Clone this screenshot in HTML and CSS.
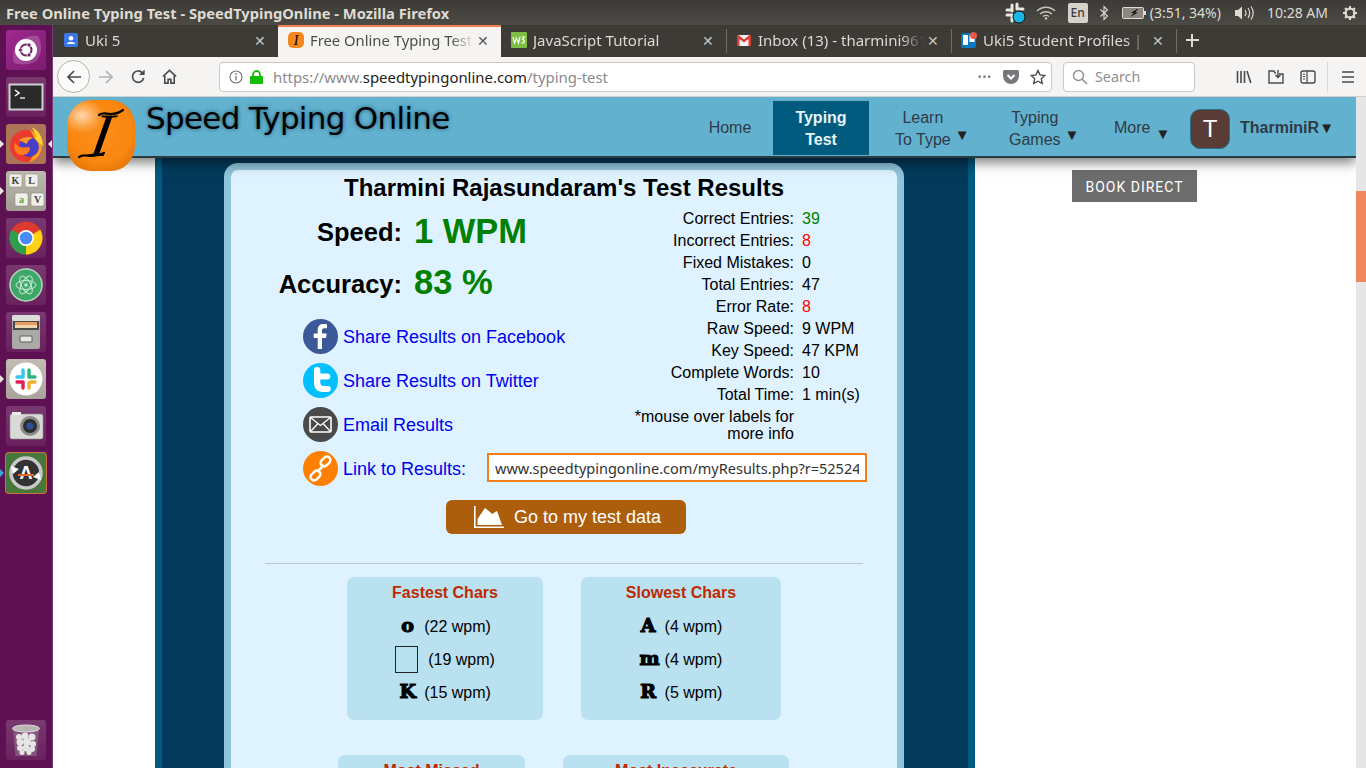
FILE: index.html
```html
<!DOCTYPE html>
<html lang="en">
<head>
<meta charset="utf-8">
<title>Free Online Typing Test - SpeedTypingOnline - Mozilla Firefox</title>
<link rel="stylesheet" href="styles.css">
</head>
<body>
<header class="panel">
  <div class="panel-title">Free Online Typing Test - SpeedTypingOnline - Mozilla Firefox</div>
  <div class="indicators">
    <svg class="ind-slack" viewBox="0 0 22 22"><g stroke="#e8e6e0" stroke-width="3" stroke-linecap="round"><path d="M8 3v6M3 8h5M13 2v5M14 7h5M3 13h5M8 14v5"/></g><circle cx="15" cy="15" r="6" fill="#19b5e6" stroke="#111" stroke-width="1"/></svg>
    <svg class="ind-wifi" viewBox="0 0 20 14"><g fill="none" stroke="#c9c6bd" stroke-width="1.3"><path d="M1 5c5-5 13-5 18 0"/><path d="M4 8c3.500-3 8.500-3 12 0"/><path d="M7 10.500c2-1.500 4-1.500 6 0"/></g><circle cx="10" cy="12.500" r="1.300" fill="#c9c6bd"/></svg>
    <span class="ind-lang">En</span>
    <svg class="ind-bt" viewBox="0 0 10 16"><path d="M1.500 4.500l7 6.500-3.500 3.500v-13l3.500 3.500-7 6.500" fill="none" stroke="#dfdbd2" stroke-width="1.100"/></svg>
    <svg class="ind-batt" viewBox="0 0 24 12"><rect x=".5" y=".5" width="21" height="11" rx="1" fill="#8a8880" stroke="#dfdbd2"/><rect x="22" y="4" width="2" height="4" fill="#dfdbd2"/><path d="M15 2l-6 4h3l-4 4 8-4.500h-3l3-3.500z" fill="#111"/></svg>
    <span class="ind-text ind-pct">(3:51, 34%)</span>
    <svg class="ind-vol" viewBox="0 0 20 16"><path d="M1 5h3l4-3.500v13L4 11H1z" fill="#dfdbd2"/><g fill="none" stroke="#dfdbd2" stroke-width="1.200"><path d="M11 5c1.300 2 1.300 4 0 6M14 3c2 3 2 7 0 10M17 1.500c2.700 4 2.700 9 0 13"/></g></svg>
    <span class="ind-text ind-time">10:28 AM</span>
    <svg class="ind-gear" viewBox="0 0 16 16"><circle cx="8" cy="8" r="4.500" fill="none" stroke="#dfdbd2" stroke-width="2"/><path d="M8 1v4M8 11v4M1 8h4M11 8h4M3 3l2.500 2.500M13 3l-2.500 2.500M3 13l2.500-2.500M13 13l-2.500-2.500" stroke="#dfdbd2" stroke-width="2"/></svg>
  </div>
</header>

<div class="desktop">
  <nav class="launcher">
    <div class="tile tile-ubuntu"><svg viewBox="0 0 40 40"><path d="M8 33C4 18 14 4 32 6c5 8 4 20-3 26-7 3-15 3-21 1z" fill="#fff" opacity=".18"/><circle cx="20" cy="20" r="11" fill="#fff"/><circle cx="20" cy="20" r="5.500" fill="none" stroke="#6f2166" stroke-width="2"/><g fill="#6f2166" stroke="#fff" stroke-width=".7"><circle cx="14.500" cy="20" r="2"/><circle cx="23" cy="15" r="2"/><circle cx="23" cy="25" r="2"/></g></svg></div>
    <div class="tile tile-dark"><svg viewBox="0 0 40 40"><rect x="3.500" y="7.500" width="33" height="25" fill="#2a2a2a" stroke="#cfcfcf" stroke-width="2"/><path d="M9 13l4 3-4 3" fill="none" stroke="#fff" stroke-width="1.500"/><path d="M14 21h5" stroke="#fff" stroke-width="1.300"/></svg></div>
    <div class="tile tile-fox pip-left pip-right"><svg viewBox="0 0 40 40"><circle cx="20" cy="22" r="16" fill="#ea3a2e"/><path d="M24 6.500C32 8 36 15 36 22c0 8-6 15-13 16 7-8 9-22 1-31.500z" fill="#ff9c1a"/><path d="M25 3c8 3 12 11 12 19l-8-7c2-3 0-8-4-12z" fill="#ffd430"/><circle cx="23" cy="23" r="10" fill="#4b3ec6"/><path d="M9 18c2 6 9 6 14 5 3 3-2 9-8 8-6-1-8-7-6-13z" fill="#ff7a1a"/><path d="M13 16c4-3 10-4 14-2-3 1-6 3-6 6z" fill="#ff9a2a"/></svg></div>
    <div class="tile tile-keys pip-left"><svg viewBox="0 0 40 40"><g fill="#efeee8" stroke="#8a887e" stroke-width=".5"><rect x="3" y="3" width="13" height="13" rx="2"/><rect x="19" y="3" width="13" height="13" rx="2"/><rect x="9" y="22" width="13" height="13" rx="2"/><rect x="25" y="22" width="13" height="13" rx="2"/></g><g class="key-text"><text x="9.500" y="13">K</text><text x="25.500" y="13">L</text><text x="15.500" y="32" class="key-a">a</text><text x="31.500" y="32">V</text></g></svg></div>
    <div class="tile"><svg viewBox="0 0 40 40"><circle cx="20" cy="20" r="16.500" fill="#dd3a2f"/><path d="M20 20L34.300 11.800A16.500 16.500 0 0 1 20 36.500z" fill="#fcd116"/><path d="M20 20L20 36.500A16.500 16.500 0 0 1 5.700 11.800z" fill="#2f9f4b"/><circle cx="20" cy="20" r="8" fill="#fff"/><circle cx="20" cy="20" r="6.300" fill="#4a8af4"/></svg></div>
    <div class="tile"><svg viewBox="0 0 40 40"><circle cx="20" cy="20" r="16" fill="#3fa768" stroke="#b5d8c2" stroke-width="1.500"/><g fill="none" stroke="#c9ead6" stroke-width="1"><ellipse cx="20" cy="20" rx="10" ry="4.500"/><ellipse cx="20" cy="20" rx="10" ry="4.500" transform="rotate(60 20 20)"/><ellipse cx="20" cy="20" rx="10" ry="4.500" transform="rotate(120 20 20)"/></g><circle cx="20" cy="20" r="1.800" fill="#c9ead6"/></svg></div>
    <div class="tile"><svg viewBox="0 0 40 40"><rect x="6" y="3" width="28" height="34" rx="2" fill="#a9a9a5"/><rect x="6" y="3" width="28" height="6" rx="2" fill="#dcdcd8"/><rect x="7" y="9" width="26" height="9" fill="#4a4a46"/><rect x="9" y="10" width="22" height="3" fill="#e99a60"/><rect x="9" y="13" width="22" height="3" fill="#f2d6b0"/><rect x="14" y="24" width="12" height="6" rx="1" fill="#e8e8e4" stroke="#5a5a56"/></svg></div>
    <div class="tile tile-light pip-left"><svg viewBox="0 0 40 40"><circle cx="20" cy="20" r="16.500" fill="#fff"/><g stroke-width="3.400" stroke-linecap="round"><path d="M17 11v7" stroke="#36c5f0"/><path d="M11 18h5" stroke="#36c5f0"/><path d="M23 11v7" stroke="#2eb67d"/><path d="M24 18h5" stroke="#2eb67d"/><path d="M24 23h5" stroke="#ecb22e"/><path d="M23 24v5" stroke="#ecb22e"/><path d="M11 23h6" stroke="#e01e5a"/><path d="M17 24v5" stroke="#e01e5a"/></g></svg></div>
    <div class="tile"><svg viewBox="0 0 40 40"><rect x="4" y="8" width="33" height="25" rx="2" fill="#d9d9d6" stroke="#8a8a86" stroke-width=".6"/><rect x="6" y="6" width="9" height="3" fill="#ebebe8"/><circle cx="24" cy="20" r="10" fill="#8a8a88"/><circle cx="24" cy="20" r="7" fill="#2d2d2d"/><circle cx="24" cy="20" r="3.500" fill="#2c4fa0"/></svg></div>
    <div class="tile tile-green pip-left pip-blue"><svg viewBox="0 0 40 40"><circle cx="20" cy="20" r="15" fill="#333" stroke="#c9c9c9" stroke-width="3.500"/><path d="M5 13l2 8 6-5zM35 27l-2-8-6 5z" fill="#fff"/><text class="soft-a" x="20" y="26">A</text><path d="M12 22h16" stroke="#e8652f" stroke-width="2"/></svg></div>
    <div class="tile tile-trash"><svg viewBox="0 0 40 40"><path d="M7 9h26l-2.500 27h-21z" fill="#8c6a8a" opacity=".7"/><ellipse cx="20" cy="8.500" rx="13.500" ry="3.500" fill="#b9b7b2" stroke="#dfdeda"/><g fill="#e6e5e2"><circle cx="13" cy="17" r="3"/><circle cx="19" cy="16" r="3.500"/><circle cx="26" cy="17" r="3.500"/><circle cx="14" cy="22" r="3.500"/><circle cx="21" cy="22" r="4"/><circle cx="27" cy="24" r="3"/><circle cx="14" cy="28" r="3"/><circle cx="20" cy="28" r="3.500"/><circle cx="26" cy="29" r="3"/><circle cx="16" cy="32.500" r="2.500"/><circle cx="23" cy="32.500" r="2.500"/></g></svg></div>
  </nav>

  <div class="browser">
    <div class="tabs">
      <div class="tab"><svg class="favicon" viewBox="0 0 16 16"><rect x="1" y="1" width="14" height="14" rx="2" fill="#3b78e7"/><circle cx="8" cy="6.200" r="2.300" fill="#fff"/><path d="M3.800 12c.6-2.600 7.800-2.600 8.400 0z" fill="#fff"/></svg><span class="tab-label">Uki 5</span><span class="tab-x">✕</span></div>
      <div class="tab tab-active"><svg class="favicon" viewBox="0 0 16 16"><rect width="16" height="16" rx="5" fill="#f5871f"/><text class="fav-i" x="8" y="13">I</text></svg><span class="tab-label">Free Online Typing Test -</span><span class="tab-x">✕</span></div>
      <div class="tab"><svg class="favicon" viewBox="0 0 16 16"><rect width="16" height="16" rx="1" fill="#7dbf42"/><path d="M2 5l1.500 6 2-5 2 5L9 5" fill="none" stroke="#fff" stroke-width="1.200"/><path d="M10.500 5h3l-2 2.500c2.500 0 2.500 4-1 3.500" fill="none" stroke="#fff" stroke-width="1.200"/></svg><span class="tab-label">JavaScript Tutorial</span><span class="tab-x">✕</span></div>
      <div class="tab tab-sep"><svg class="favicon" viewBox="0 0 16 16"><rect x="1" y="3" width="14" height="11" fill="#f1f1f1"/><path d="M1 3v11h2.500V7L8 10.500 12.500 7v7H15V3h-1.500L8 7.500 2.500 3z" fill="#d93f32"/></svg><span class="tab-label">Inbox (13) - tharmini961</span><span class="tab-x">✕</span></div>
      <div class="tab tab-sep"><svg class="favicon" viewBox="0 0 16 16"><rect y="1" width="15" height="15" rx="2" fill="#0a79bf"/><rect x="2" y="3" width="5" height="10" fill="#fff"/><rect x="8.500" y="3" width="5" height="7" fill="#fff"/><circle cx="12.500" cy="3.500" r="3.500" fill="#eb5a46"/></svg><span class="tab-label">Uki5 Student Profiles | Tr</span><span class="tab-x">✕</span></div>
      <div class="tab-new"><span class="tab-plus"></span></div>
    </div>

    <div class="toolbar">
      <button class="back" type="button"><svg viewBox="0 0 18 18"><path d="M16 9H3M9 3L3 9l6 6" fill="none" stroke="#4a4a4f" stroke-width="1.700"/></svg></button>
      <svg class="tool tool-forward" viewBox="0 0 18 18"><path d="M2 9h13M9 3l6 6-6 6" fill="none" stroke="#b1b1b3" stroke-width="1.700"/></svg>
      <svg class="tool tool-reload" viewBox="0 0 18 18"><path d="M14.500 10.500A6 6 0 1 1 13 5" fill="none" stroke="#4a4a4f" stroke-width="1.800"/><path d="M15.500 1.500v6h-6z" fill="#4a4a4f"/></svg>
      <svg class="tool tool-home" viewBox="0 0 18 18"><path d="M2 9l7-6.500L16 9" fill="none" stroke="#4a4a4f" stroke-width="1.700"/><path d="M4 8v8h3.500v-4h3v4H14V8" fill="none" stroke="#4a4a4f" stroke-width="1.700"/></svg>
      <div class="urlbar">
        <svg class="url-info" viewBox="0 0 14 14"><circle cx="7" cy="7" r="6" fill="none" stroke="#77767b" stroke-width="1.100"/><path d="M7 6v4.500" stroke="#77767b" stroke-width="1.400"/><circle cx="7" cy="3.900" r=".9" fill="#77767b"/></svg>
        <svg class="url-lock" viewBox="0 0 13 14"><rect y="6" width="13" height="8" rx="1" fill="#12bc00"/><path d="M3 6.500V4.500a3.500 3.500 0 0 1 7 0v2" fill="none" stroke="#12bc00" stroke-width="1.800"/></svg>
        <span class="url-text"><span class="url-dim">https://www.</span>speedtypingonline.com<span class="url-dim">/typing-test</span></span>
        <span class="url-dots">•••</span>
        <svg class="url-pocket" viewBox="0 0 16 14"><path d="M1.500 0h13A1.500 1.500 0 0 1 16 1.500V6A8 8 0 0 1 0 6V1.500A1.500 1.500 0 0 1 1.500 0z" fill="#77767b"/><path d="M4.500 5L8 8.500 11.500 5" fill="none" stroke="#fff" stroke-width="2"/></svg>
        <svg class="url-star" viewBox="0 0 16 16"><path d="M8 1.500l2 4.400 4.800.6-3.500 3.300.9 4.700L8 12.200l-4.200 2.300.9-4.700L1.200 6.500 6 5.900z" fill="none" stroke="#4a4a4f" stroke-width="1.400"/></svg>
      </div>
      <div class="searchbar">
        <svg viewBox="0 0 16 16"><circle cx="6.500" cy="6.500" r="5" fill="none" stroke="#8f8f92" stroke-width="1.400"/><path d="M10.200 10.200L15 15" stroke="#8f8f92" stroke-width="1.600"/></svg>
        <span>Search</span>
      </div>
      <svg class="tool tool-lib" viewBox="0 0 16 16"><path d="M1.500 2v12M5 2v12M8.500 2v12M11 2l3.800 12" fill="none" stroke="#4a4a4f" stroke-width="1.600"/></svg>
      <svg class="tool tool-dl" viewBox="0 0 16 16"><path d="M1 4v10h14V5h-4M1 4V2h5l1 2h1" fill="none" stroke="#4a4a4f" stroke-width="1.400"/><path d="M10 1v7M7.500 6l2.500 2.500L12.500 6" fill="none" stroke="#4a4a4f" stroke-width="1.400"/></svg>
      <svg class="tool tool-side" viewBox="0 0 16 16"><rect x="1" y="2" width="14" height="12" rx="2" fill="none" stroke="#4a4a4f" stroke-width="1.400"/><path d="M7 2v12M3 5h2M3 7.500h2M3 10h2" stroke="#4a4a4f" stroke-width="1.200"/></svg>
      <span class="tool-sep"></span>
      <svg class="tool tool-menu" viewBox="0 0 16 16"><path d="M2 3h12M2 8h12M2 13h12" stroke="#4a4a4f" stroke-width="1.600"/></svg>
    </div>

    <div class="viewport">
      <div class="page">
        <div class="site-header">
          <div class="logo"><svg viewBox="0 0 68 71"><text class="logo-i" x="41" y="56" transform="skewX(-10)">I</text><path d="M32 15c4-3 7-1 12-1 5 0 8-1 12-4M12 57c5-3 8-1 13-1 5 0 8-1 12-3" fill="none" stroke="#000" stroke-width="2.200" stroke-linecap="round"/></svg></div>
          <div class="site-name">Speed Typing Online</div>
          <ul class="site-nav">
            <li class="nav-home">Home</li>
            <li class="nav-active">Typing<br>Test</li>
            <li class="nav-learn"><span>Learn<br>To Type</span><i class="caret caret-low">▼</i></li>
            <li class="nav-games"><span>Typing<br>Games</span><i class="caret caret-low">▼</i></li>
            <li class="nav-more"><span>More</span><i class="caret caret-more">▼</i></li>
            <li class="nav-user"><span class="avatar">T</span><b>TharminiR</b><i class="caret caret-user">▼</i></li>
          </ul>
        </div>

        <div class="content">
          <div class="column-outer">
            <div class="column-inner">
              <main class="card">
                <h1>Tharmini Rajasundaram's Test Results</h1>
                <div class="summary">
                  <div class="summary-left">
                    <div class="metric metric-speed"><span class="metric-label">Speed:</span><span class="metric-value">1 WPM</span></div>
                    <div class="metric"><span class="metric-label">Accuracy:</span><span class="metric-value">83 %</span></div>
                    <ul class="share share-top">
                      <li><svg viewBox="0 0 35 35"><circle cx="17.500" cy="17.500" r="17.500" fill="#3b5998"/><path d="M19 30V19h4l.7-4.500H19v-3c0-1.300.5-2.200 2.300-2.200H24V5.200C23.500 5.100 22 5 20.500 5c-3.500 0-5.800 2-5.800 5.700v3.800h-4V19h4v11z" fill="#fff"/></svg><a>Share Results on Facebook</a></li>
                      <li><svg viewBox="0 0 35 35"><circle cx="17.500" cy="17.500" r="17.500" fill="#00bfff"/><path d="M11 6.500a3.200 3.200 0 0 1 6.300 0v4h7a3 3 0 0 1 0 6h-7v3c0 2.500 1.300 3.500 3.500 3.500h4a3 3 0 0 1 0 6h-5c-5.500 0-8.800-3.500-8.800-9z" fill="#fff"/></svg><a>Share Results on Twitter</a></li>
                      <li><svg viewBox="0 0 35 35"><circle cx="17.500" cy="17.500" r="17.500" fill="#4a4a4a"/><rect x="7" y="10" width="21" height="15" rx="1" fill="none" stroke="#fff" stroke-width="1.600"/><path d="M7.500 10.500l10 8 10-8M7.500 24.500l7.500-8M27.500 24.500l-7.500-8" fill="none" stroke="#fff" stroke-width="1.300"/></svg><a>Email Results</a></li>
                    </ul>
                  </div>
                  <dl class="stats">
                    <dt>Correct Entries:</dt><dd class="good">39</dd>
                    <dt>Incorrect Entries:</dt><dd class="bad">8</dd>
                    <dt>Fixed Mistakes:</dt><dd>0</dd>
                    <dt>Total Entries:</dt><dd>47</dd>
                    <dt>Error Rate:</dt><dd class="bad">8</dd>
                    <dt>Raw Speed:</dt><dd>9 WPM</dd>
                    <dt>Key Speed:</dt><dd>47 KPM</dd>
                    <dt>Complete Words:</dt><dd>10</dd>
                    <dt>Total Time:</dt><dd>1 min(s)</dd>
                    <dt class="stats-note">*mouse over labels for more info</dt><dd></dd>
                  </dl>
                </div>
                <div class="share share-link"><svg viewBox="0 0 35 35"><circle cx="17.500" cy="17.500" r="17.500" fill="#ff7f00"/><g fill="none" stroke="#fff" stroke-width="2.500"><rect x="17" y="7" width="11" height="7" rx="3.500" transform="rotate(-45 22.500 10.500)"/><rect x="7" y="21" width="11" height="7" rx="3.500" transform="rotate(-45 12.500 24.500)"/><path d="M14 21l7-7"/></g></svg><a>Link to Results:</a><input class="result-url" type="text" value="www.speedtypingonline.com/myResults.php?r=52524" readonly></div>
                <div class="cta-row">
                  <button class="cta" type="button"><svg viewBox="0 0 31 23"><path d="M.8 0v21.200H30" fill="none" stroke="#fff" stroke-width="1.600"/><path d="M3.500 19V13L11 2l5 4 2 2 5-3 5 14z" fill="#fff"/></svg>Go to my test data</button>
                </div>
                <hr class="divider">
                <div class="boxes boxes-top">
                  <section class="box box-fastest">
                    <h2>Fastest Chars</h2>
                    <p><span class="glyph">o</span><span>(22 wpm)</span></p>
                    <p><span class="glyph-missing"></span><span>(19 wpm)</span></p>
                    <p><span class="glyph">K</span><span>(15 wpm)</span></p>
                  </section>
                  <section class="box box-slowest">
                    <h2>Slowest Chars</h2>
                    <p><span class="glyph">A</span><span>(4 wpm)</span></p>
                    <p><span class="glyph">m</span><span>(4 wpm)</span></p>
                    <p><span class="glyph">R</span><span>(5 wpm)</span></p>
                  </section>
                </div>
                <div class="boxes boxes-bottom">
                  <section class="box box-missed"><h2>Most Missed</h2></section>
                  <section class="box box-inacc"><h2>Most Inaccurate</h2></section>
                </div>
              </main>
            </div>
          </div>
          <aside class="side">
            <a class="book">BOOK DIRECT</a>
          </aside>
        </div>
      </div>
      <div class="scrollbar"><div class="scroll-thumb"></div></div>
    </div>
  </div>
</div>
</body>
</html>
```

FILE: styles.css
```css
* { box-sizing: border-box; }
html, body { margin: 0; padding: 0; height: 768px; overflow: hidden; }
body { font-family: "Liberation Sans", Arial, sans-serif; background: #fff; display: flex; flex-direction: column; }
svg { display: block; flex: none; }

/* top panel */
.panel { height: 25px; flex: none; display: flex; align-items: center; justify-content: space-between; background: linear-gradient(#3c3b37, #4c4a45); color: #dfdbd2; font-family: "Noto Sans", sans-serif; }
.panel-title { padding-left: 6px; font-size: 14.700px; font-weight: 700; white-space: nowrap; }
.indicators { display: flex; align-items: center; height: 25px; }
.ind-slack { width: 22px; height: 22px; margin-right: 10px; }
.ind-wifi { width: 20px; height: 14px; margin-right: 12px; }
.ind-lang { width: 20px; height: 20px; background: #d6d2c9; color: #3c3b37; border-radius: 2px; font-size: 12px; font-weight: 500; text-align: center; line-height: 20px; margin-right: 11px; }
.ind-bt { width: 10px; height: 16px; margin-right: 13px; }
.ind-batt { width: 24px; height: 12px; margin-right: 4px; }
.ind-text { font-size: 14px; white-space: nowrap; color: #dfdbd2; }
.ind-pct { margin-right: 13px; }
.ind-vol { width: 20px; height: 16px; margin-right: 13px; }
.ind-time { margin-right: 14px; }
.ind-gear { width: 16px; height: 16px; margin-right: 8px; }

.desktop { flex: 1; display: flex; min-height: 0; }

/* launcher */
.launcher { width: 53px; flex: none; background: #5e1152; display: flex; flex-direction: column; align-items: flex-start; padding: 5px 0 8px 6px; gap: 7px; border-right: 1px solid #7d3d72; }
.tile { position: relative; width: 40px; height: 40px; border-radius: 3px; background: linear-gradient(rgba(255,255,255,.17), rgba(255,255,255,.07)); }
.tile svg { width: 40px; height: 40px; }
.tile-ubuntu { background: linear-gradient(135deg, #a02a90, #7c1a70); }
.tile-fox { background: #ad7457; }
.tile-keys { background: linear-gradient(#bcb9af, #a09c92); }
.tile-light { background: linear-gradient(#c2bcb5, #a9a39c); }
.tile-green { background: #47773a; box-shadow: 0 0 0 1px #c9743a; }
.tile-trash { margin-top: auto; }
.pip-left::before { content: ""; position: absolute; left: -6px; top: 16px; border: 4px solid transparent; border-left: 4px solid #e8e4e0; border-right: 0; }
.pip-right::after { content: ""; position: absolute; right: -6px; top: 16px; border: 4px solid transparent; border-right: 4px solid #e8e4e0; border-left: 0; }
.pip-blue::before { border-left-color: #38a6dd; }
.key-text text { font-family: "Liberation Serif", serif; font-size: 10px; font-weight: 700; fill: #444; text-anchor: middle; }
.key-text .key-a { fill: #5da02a; }
.soft-a { font-family: "Liberation Sans", sans-serif; font-weight: 700; font-size: 18px; fill: #fff; text-anchor: middle; }

/* browser chrome */
.browser { flex: 1; min-width: 0; display: flex; flex-direction: column; }
.tabs { height: 32px; flex: none; display: flex; background: #3d3b36; font-family: "Noto Sans", sans-serif; font-size: 15px; color: #dcdad5; }
.tab { width: 225px; flex: none; display: flex; align-items: center; padding: 0 9px 2px 10px; position: relative; }
.tab-active { width: 223px; background: #f5f4f2; color: #4e4d49; border-top: 2px solid #ed7f55; padding-bottom: 4px; font-size: 14.800px; }
.tab-sep::before { content: ""; position: absolute; left: 0; top: 4px; bottom: 4px; width: 1px; background: #6f6d67; }
.favicon { width: 16px; height: 16px; margin-right: 6px; }
.fav-i { font-family: "Liberation Serif", serif; font-style: italic; font-size: 14px; text-anchor: middle; fill: #000; }
.tab-label { flex: 1; white-space: nowrap; overflow: hidden; -webkit-mask-image: linear-gradient(90deg, #000 86%, transparent); mask-image: linear-gradient(90deg, #000 86%, transparent); }
.tab-x { width: 18px; text-align: center; font-size: 14px; color: #c6c4bf; }
.tab-active .tab-x { color: #55544f; }
.tab-new { width: 32px; padding-bottom: 2px; display: flex; align-items: center; justify-content: center; position: relative; }
.tab-new::before { content: ""; position: absolute; left: 0; top: 4px; bottom: 4px; width: 1px; background: #6f6d67; }
.tab-plus { width: 13px; height: 13px; background: linear-gradient(#dcdad5, #dcdad5) center / 13px 2px no-repeat, linear-gradient(#dcdad5, #dcdad5) center / 2px 13px no-repeat; }

.toolbar { height: 40px; flex: none; display: flex; align-items: center; background: #f5f4f2; border-bottom: 1px solid #d2d0cc; }
.back { width: 33px; height: 33px; margin-left: 4px; padding: 0; border: 1px solid #b3b1ad; border-radius: 50%; background: #fbfbfa; display: flex; align-items: center; justify-content: center; }
.back svg { width: 18px; height: 18px; }
.tool { width: 16px; height: 16px; }
.tool-forward { margin-left: 7px; width: 18px; height: 18px; }
.tool-reload { margin-left: 15px; width: 17px; height: 17px; }
.tool-home { margin-left: 14px; width: 17px; height: 17px; }
.urlbar { width: 833px; height: 30px; margin-left: 41px; flex: none; display: flex; align-items: center; background: #fff; border: 1px solid #ccc9c4; border-radius: 4px; font-family: "Noto Sans", sans-serif; padding-left: 9px; }
.url-info { width: 14px; height: 14px; }
.url-lock { width: 13px; height: 14px; margin-left: 7px; }
.url-text { font-size: 14.900px; color: #222; margin-left: 10px; flex: 1; white-space: nowrap; }
.url-dim { color: #8a8a8e; }
.url-dots { font-size: 10px; color: #77767b; letter-spacing: 1px; margin-right: 11px; }
.url-pocket { width: 16px; height: 14px; margin-right: 11px; }
.url-star { width: 16px; height: 16px; margin-right: 5px; }
.searchbar { width: 132px; height: 30px; margin-left: 11px; flex: none; display: flex; align-items: center; gap: 7px; padding-left: 8px; background: #fff; border: 1px solid #ccc9c4; border-radius: 4px; font-family: "Noto Sans", sans-serif; font-size: 14.300px; color: #8f8f92; }
.searchbar svg { width: 16px; height: 16px; }
.tool-lib { margin-left: 41px; }
.tool-dl { margin-left: 16px; }
.tool-side { margin-left: 16px; }
.tool-sep { width: 1px; height: 30px; background: #dcdad6; margin-left: 11px; }
.tool-menu { margin-left: 12px; }

/* page */
.viewport { flex: 1; min-height: 0; display: flex; }
.page { flex: 1; min-width: 0; display: flex; flex-direction: column; position: relative; overflow: hidden; }
.scrollbar { width: 10px; flex: none; background: #e6e6e6; padding-top: 94px; }
.scroll-thumb { height: 91px; background: #ef885f; }

.site-header { height: 61px; flex: none; position: relative; z-index: 2; background: #62b1cf; border-bottom: 2px solid #2c3a42; box-shadow: 0 4px 12px rgba(0,0,0,.55); display: flex; align-items: flex-start; }
.logo { position: absolute; left: 14px; top: 3px; width: 68px; height: 71px; border-radius: 24px / 26px; background: radial-gradient(ellipse 22px 18px at 22% 22%, #ffd7ae 0, rgba(255,190,120,.6) 55%, transparent 100%), radial-gradient(circle at 50% 45%, #fb8f1c 0, #f9860f 60%, #dc7005 92%, #b75c02 100%); z-index: 3; }
.logo svg { width: 68px; height: 71px; }
.logo-i { font-family: "Liberation Serif", serif; font-style: italic; font-size: 62px; text-anchor: middle; fill: #000; }
.site-name { margin-left: 93px; margin-top: 1px; font-family: "DejaVu Sans", sans-serif; font-size: 31px; letter-spacing: -.7px; line-height: 40px; color: #000; white-space: nowrap; text-shadow: 0 0 4px #1f5c78; }
.site-nav { list-style: none; margin: 0 0 0 auto; padding: 0; display: flex; height: 59px; font-size: 16px; line-height: 22px; color: #2f3b45; }
.site-nav li { display: flex; align-items: center; text-align: center; padding-top: 2px; }
.nav-home { width: 86px; justify-content: center; }
.nav-active { width: 96px; margin: 4px 0 1px; justify-content: center; background: #005b7f; color: #e6f4fb; font-weight: 700; }
.site-nav .nav-learn { width: 116px; padding: 4px 0 0 26px; }
.site-nav .nav-games { width: 129px; padding: 4px 0 0 24px; }
.nav-more { width: 76px; }
.site-nav .nav-user { width: 166px; padding-top: 4px; }
.nav-user b { margin: 0 0 2px 10px; }
.caret { font-style: normal; font-size: 15px; color: #222; line-height: 14px; }
.caret-low { margin: 13px 0 0 4px; }
.caret-more { margin: 12px 0 0 5px; }
.caret-user { margin: 0 0 2px 0; }
.avatar { width: 40px; height: 40px; border-radius: 10px; background: #583c35; border: 1px solid #2a6f8c; color: #fff; font-size: 24px; display: flex; align-items: center; justify-content: center; }

.content { flex: 1; min-height: 0; display: flex; padding-left: 102px; }
.column-outer { width: 820px; flex: none; padding: 0 7px; background: #005a7f; }
.column-inner { height: 100%; background: #033a5b; padding: 5px 62px 0; }
.card { width: 680px; height: 700px; border: 7px solid #8fc5da; border-radius: 14px; background: #def3ff; color: #000; }
.card h1 { margin: 0; padding-top: 4px; font-size: 24px; line-height: 28px; font-weight: 700; text-align: center; }

.summary { display: flex; height: 240px; }
.summary-left { width: 398px; flex: none; }
.metric { display: flex; height: 52px; align-items: center; }
.metric-speed { margin-top: 4px; }
.metric-label { width: 171px; text-align: right; font-size: 25.500px; font-weight: 700; }
.metric-value { margin: 0 0 3px 12px; font-size: 34.500px; font-weight: 700; color: #008000; }
.metric-speed .metric-value { margin-bottom: 1px; }
.share { display: flex; font-size: 18px; color: #0000ee; white-space: nowrap; }
.share a { margin-top: 2px; }
.share-top { list-style: none; margin: 9px 0 0 72px; padding: 0; flex-direction: column; gap: 9px; }
.share-top li { display: flex; align-items: center; height: 35px; }
.share svg { width: 35px; height: 35px; margin-right: 5px; }
.share-link { height: 35px; align-items: center; margin: 9px 0 0 72px; }
.result-url { width: 380px; height: 29px; margin: 0 0 2px 21px; padding: 0 6px; border: 2px solid #f57f17; background: #fff; font-family: "Noto Sans", sans-serif; font-size: 14.500px; color: #333; outline: 0; }

.stats { margin: 6px 0 0; display: grid; grid-template-columns: 165px 60px; grid-auto-rows: min-content; column-gap: 8px; font-size: 16px; line-height: 22px; }
.stats dt { text-align: right; white-space: nowrap; }
.stats dd { margin: 0; white-space: nowrap; }
.stats .stats-note { white-space: normal; line-height: 17px; padding-top: 2px; }
.good { color: #008000; }
.bad { color: #f00; }

.cta-row { display: flex; padding-left: 215px; margin-top: 14px; }
.cta { width: 240px; height: 34px; border: 0; border-radius: 6px; background: #ad5e0c; color: #fff; font-family: "Liberation Sans", sans-serif; font-size: 18px; display: flex; align-items: center; padding: 0 0 0 28px; gap: 9px; }
.cta svg { width: 31px; height: 23px; }
.divider { margin: 29px 34px 0; border: 0; border-top: 1px solid #b5c8d3; }

.boxes { display: flex; }
.boxes-top { margin: 13px 0 0 116px; gap: 38px; }
.boxes-bottom { margin: 35px 0 0 107px; gap: 38px; }
.box { background: #bae1f0; border-radius: 7px; }
.box h2 { margin: 0; padding-top: 7px; font-size: 16px; line-height: 18px; font-weight: 700; color: #bf2a00; text-align: center; }
.box p { margin: 0; height: 33px; display: flex; align-items: center; justify-content: center; font-size: 16px; }
.box h2 + p { margin-top: 8px; }
.box-fastest { width: 196px; height: 143px; }
.box-slowest { width: 200px; height: 143px; }
.box-missed { width: 187px; height: 60px; }
.box-inacc { width: 226px; height: 60px; }
.glyph { width: 17px; margin: 0 8px 4px 0; text-align: center; font-family: "DejaVu Serif", serif; font-weight: 700; font-size: 19px; -webkit-text-stroke: 1.200px #000; line-height: 20px; }
.glyph-missing { width: 23px; height: 27px; margin-right: 10px; border: 1px solid #222; }

.side { flex: 1; padding: 12px 0 0 97px; }
.book { display: block; width: 125px; height: 32px; background: #6d6d6d; color: #fff; font-family: Roboto, sans-serif; font-size: 14px; letter-spacing: 1px; line-height: 34px; text-align: center; }
```
